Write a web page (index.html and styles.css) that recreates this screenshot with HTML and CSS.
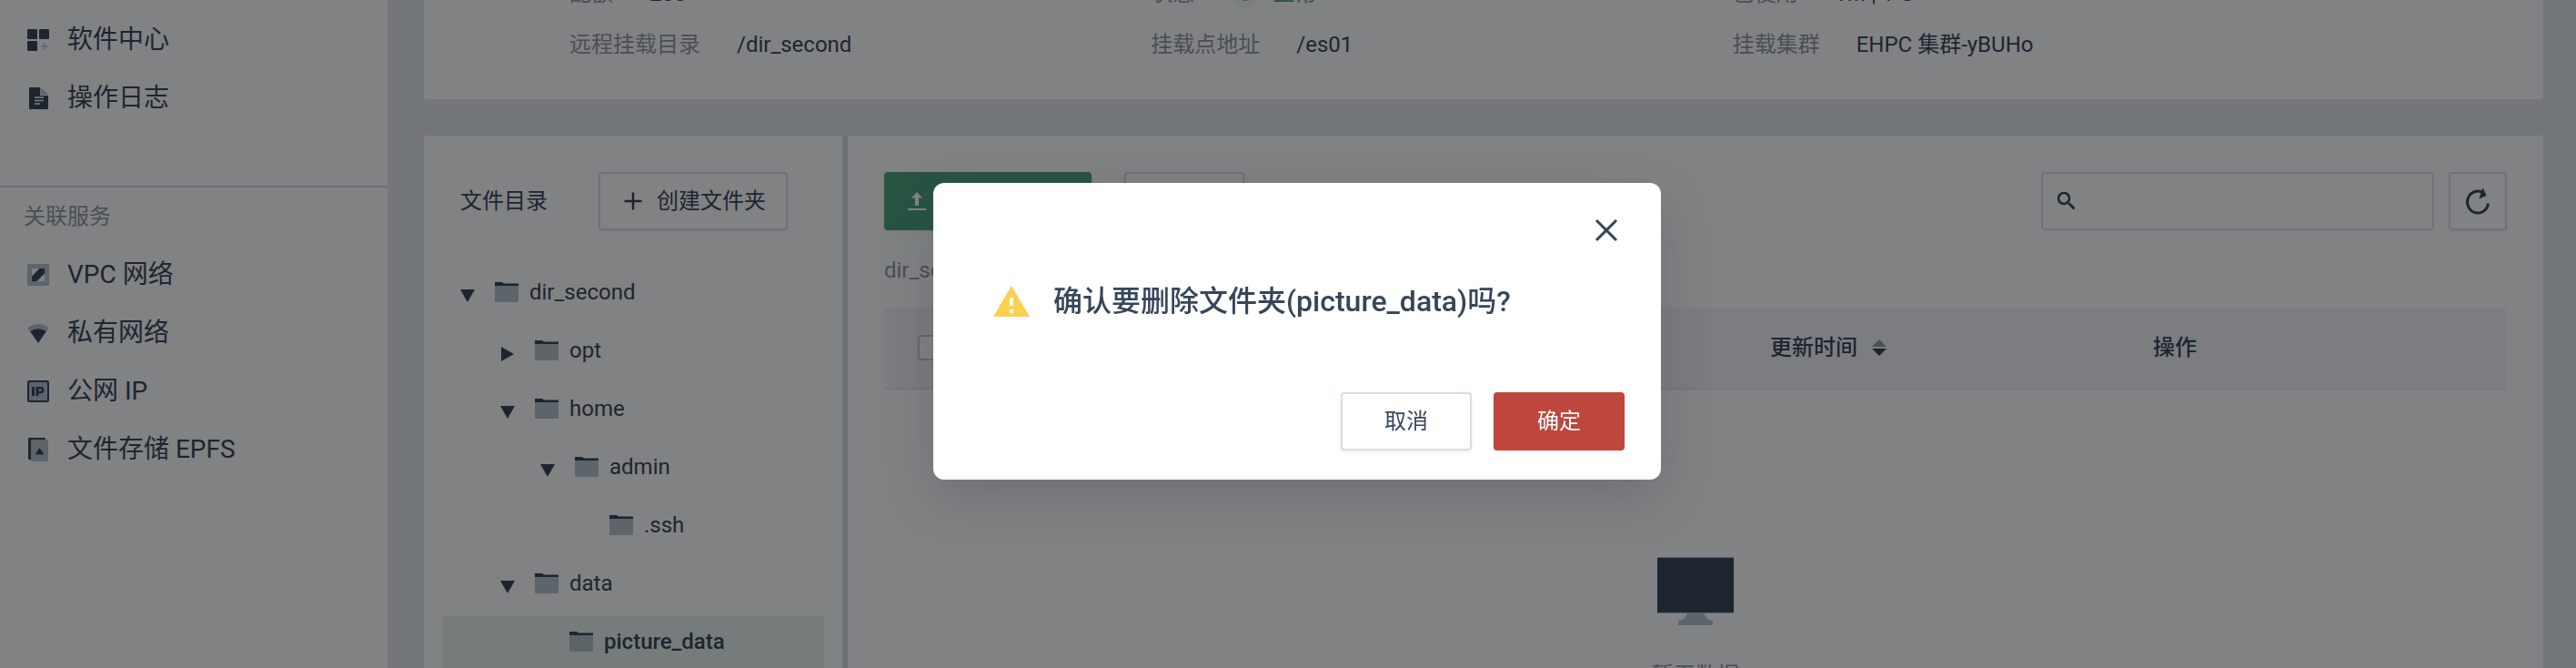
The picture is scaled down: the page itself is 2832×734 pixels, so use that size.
FILE: index.html
```html
<!DOCTYPE html>
<html lang="zh-CN">
<head>
<meta charset="utf-8">
<meta name="viewport" content="width=device-width, initial-scale=1">
<title>文件管理</title>
<link rel="stylesheet" href="styles.css">
</head>
<body>
<svg class="sprite" aria-hidden="true">
  <symbol id="folder" viewBox="0 0 26 22">
    <path class="light" d="M0 4h26v16.500a1.500 1.500 0 0 1-1.500 1.500h-23A1.500 1.500 0 0 1 0 20.500z"/>
    <path class="dark" d="M0 0h8l2 1.500h16v2.500H0z"/>
  </symbol>
  <symbol id="down" viewBox="0 0 16 16"><path class="dark" d="M0 1h16L8 15z"/></symbol>
  <symbol id="right" viewBox="0 0 16 16"><path class="dark" d="M1 0l14 8-14 8z"/></symbol>
</svg>
<div class="app">
  <aside class="sidebar">
    <nav class="nav">
      <a class="nav-item" href="#"><svg class="nav-icon" viewBox="0 0 24 24"><rect class="dark" width="11" height="11" rx="1"/><rect class="dark" x="13" width="11" height="11" rx="1"/><rect class="dark" y="13" width="11" height="11" rx="1"/><path class="light" d="M18 15h1.500v3.200H23v1.600h-3.500V23H18v-3.200h-3v-1.600h3z"/></svg>软件中心</a>
      <a class="nav-item" href="#"><svg class="nav-icon" viewBox="0 0 24 24"><path class="dark" d="M2 0h12v9h9v15H2z"/><path class="light" d="M14.500 0L23 8h-8.500z"/><path class="line" d="M8 11h10M8 14.500h10M8 18h6"/></svg>操作日志</a>
    </nav>
    <nav class="nav related">
      <h2 class="nav-title">关联服务</h2>
      <a class="nav-item" href="#"><svg class="nav-icon" viewBox="0 0 24 24"><path class="light" fill-rule="evenodd" d="M1 0h22a1 1 0 0 1 1 1v22a1 1 0 0 1-1 1H1a1 1 0 0 1-1-1V1a1 1 0 0 1 1-1zM5 5v14h14V5z"/><path class="dark" d="M13.500 5H19v5.500L10.500 19H5v-5.500z"/></svg>VPC 网络</a>
      <a class="nav-item" href="#"><svg class="nav-icon" viewBox="0 0 24 24"><path class="light" d="M0 6.500Q12-2.500 24 6.500L21 10Q12 5 3 10z"/><path class="dark" d="M3 10Q12 4.500 21 10L12 23z"/></svg>私有网络</a>
      <a class="nav-item" href="#"><svg class="nav-icon" viewBox="0 0 24 24"><rect class="dark" width="24" height="24" rx="2"/><rect class="light" x="2" y="2" width="20" height="20" rx="1"/><path class="dark" fill-rule="evenodd" d="M5 7h3v10H5zM9.500 7h5.500a3.600 3.600 0 0 1 0 7.200h-2.500V17h-3zM12.500 9.300v2.700h2a1.350 1.350 0 0 0 0-2.700z"/></svg>公网 IP</a>
      <a class="nav-item" href="#"><svg class="nav-icon" viewBox="0 0 24 24"><path class="dark" d="M2-1h17a1 1 0 0 1 1 1v2H4v21H2a1 1 0 0 1-1-1V0a1 1 0 0 1 1-1z"/><rect class="light" x="4" y="1" width="19" height="24" rx="1"/><path class="dark" d="M13.500 10l5 7.500h-10z"/></svg>文件存储 EPFS</a>
    </nav>
  </aside>
  <main class="main">
    <section class="card info">
      <dl class="facts">
        <div class="fact"><dt>配额</dt><dd>200</dd></div>
        <div class="fact"><dt>状态</dt><dd class="status"><span class="halo"></span>正常</dd></div>
        <div class="fact"><dt>已使用</dt><dd>1M | 1 G</dd></div>
        <div class="fact"><dt>远程挂载目录</dt><dd>/dir_second</dd></div>
        <div class="fact"><dt>挂载点地址</dt><dd>/es01</dd></div>
        <div class="fact"><dt>挂载集群</dt><dd>EHPC 集群-yBUHo</dd></div>
      </dl>
    </section>
    <section class="card files">
      <div class="tree-panel">
        <div class="tree-head">
          <h3 class="tree-title">文件目录</h3>
          <button class="btn create" type="button"><svg class="plus" viewBox="0 0 28 28"><path class="stroke" d="M4.500 14h19M14 4.500v19"/></svg>创建文件夹</button>
        </div>
        <ul class="tree">
          <li class="node"><svg class="toggle"><use href="#down"/></svg><svg class="folder"><use href="#folder"/></svg>dir_second</li>
          <li class="node level-1"><svg class="toggle"><use href="#right"/></svg><svg class="folder"><use href="#folder"/></svg>opt</li>
          <li class="node level-1"><svg class="toggle"><use href="#down"/></svg><svg class="folder"><use href="#folder"/></svg>home</li>
          <li class="node level-2"><svg class="toggle"><use href="#down"/></svg><svg class="folder"><use href="#folder"/></svg>admin</li>
          <li class="node leaf-3"><svg class="folder"><use href="#folder"/></svg>.ssh</li>
          <li class="node level-1"><svg class="toggle"><use href="#down"/></svg><svg class="folder"><use href="#folder"/></svg>data</li>
          <li class="node leaf-2 selected"><svg class="folder"><use href="#folder"/></svg>picture_data</li>
        </ul>
      </div>
      <div class="content">
        <div class="toolbar">
          <button class="btn upload" type="button"><svg class="upload-icon" viewBox="0 0 20 20"><path d="M10 0l6 6.500h-4V15H8V6.500H4zM0 18h20v2H0z"/></svg>上传文件</button>
          <button class="btn remove" type="button">删除</button>
          <label class="search"><svg class="search-icon" viewBox="0 0 20 20"><circle class="stroke" cx="7" cy="7" r="6"/><path class="stroke thick" d="M12.500 12.500l6 6"/></svg><input class="search-input" type="text" aria-label="搜索"></label>
          <button class="btn refresh" type="button" aria-label="刷新"><svg class="refresh-icon" viewBox="0 0 28 32"><path class="stroke thick" d="M18.500 6A11.500 12 0 1 0 25.500 18.500"/><path class="dark" d="M19.500 1l4 9-8 3.500 2-6.500z"/></svg></button>
        </div>
        <p class="crumb">dir_second</p>
        <table class="table">
          <thead><tr>
            <th class="check-cell"><input class="check" type="checkbox" aria-label="全选"></th>
            <th>名称</th><th>文件大小</th>
            <th><span class="sortable">更新时间<svg class="sort" viewBox="0 0 16 18"><path class="muted" d="M8 0l8 8H0z"/><path class="dark" d="M0 10h16l-8 8z"/></svg></span></th>
            <th>操作</th>
          </tr></thead>
        </table>
        <div class="empty">
          <svg class="monitor" viewBox="0 0 84 76"><path class="light" d="M33 61h18.500c1 5 4 9 9.500 9v5H23v-5c5.500 0 9-4 10-9z"/><path class="light" d="M0 0h84v62H0z"/><path class="dark" d="M0 1h84v60H0z"/></svg>
          <p class="empty-text">暂无数据</p>
        </div>
      </div>
    </section>
  </main>
</div>
<div class="overlay">
  <div class="modal" role="dialog" aria-modal="true" aria-labelledby="modal-title">
    <button class="close" type="button" aria-label="关闭"><svg class="close-icon" viewBox="0 0 24 24"><path class="stroke thick" d="M1 1l22 22M23 1L1 23"/></svg></button>
    <div class="message">
      <svg class="warning" viewBox="0 0 40 34"><path fill="#f8d150" d="M20 0l20 34H0z"/><path fill="#fff" d="M18 13h4v9h-4zM18 26h4v4h-4z"/></svg>
      <h1 class="modal-title" id="modal-title">确认要删除文件夹(picture_data)吗?</h1>
    </div>
    <div class="actions">
      <button class="btn action" type="button">取消</button>
      <button class="btn action danger" type="button">确定</button>
    </div>
  </div>
</div>
</body>
</html>
```
FILE: styles.css
```css
* { box-sizing: border-box; }
:root {
  --ink: #37455a;
  --soft: #b6c2cd;
  --muted: #8f98a3;
  --line: #d5dee7;
}
body {
  margin: 0;
  overflow: hidden;
  background: #e3e7ee;
  color: var(--ink);
  font: 24px/32px Roboto, "Noto Sans CJK SC", sans-serif;
}
h1, h2, h3, p, dl, dd, ul { margin: 0; padding: 0; font-weight: 400; }
svg { flex: none; display: block; overflow: visible; }
.sprite { position: absolute; width: 0; height: 0; }
.dark { fill: var(--ink); }
.light { fill: var(--soft); }
.muted { fill: var(--muted); }
.line { stroke: #fff; stroke-width: 1.500; fill: none; }
.stroke { stroke: var(--ink); stroke-width: 2.500; fill: none; }
.thick { stroke-width: 3; }

.app { display: flex; height: 100vh; overflow: hidden; }
.sidebar { flex: none; width: 426px; background: #fff; }
.nav { padding-top: 12px; }
.related { margin-top: 64px; padding-top: 16px; border-top: 2px solid var(--line); }
.nav-title { padding: 0 26px; margin-bottom: 16px; font-size: 24px; line-height: 32px; color: var(--muted); }
.nav-item {
  display: flex;
  align-items: center;
  gap: 20px;
  height: 64px;
  padding-left: 30px;
  font-size: 28px;
  color: var(--ink);
  text-decoration: none;
}
.nav-icon { width: 24px; height: 24px; }

.main { flex: 1; min-width: 0; padding: 0 36px 0 40px; margin-top: -35px; }
.card { background: #fff; border-radius: 4px; }
.info { padding: 0 252px 32px 160px; }
.facts { display: grid; grid-template-columns: repeat(3, 1fr); }
.fact { display: flex; align-items: center; gap: 40px; height: 56px; }
.fact dt { color: var(--muted); }
.status { display: flex; align-items: center; gap: 14px; color: #4da57c; }
.halo { width: 32px; height: 32px; border: 8px solid #f1f8f5; border-radius: 50%; background: #4da57c; background-clip: padding-box; }

.files { display: flex; margin-top: 40px; min-height: 640px; }
.tree-panel { flex: none; width: 466px; padding: 40px 20px; border-right: 6px solid var(--line); }
.tree-head { display: flex; align-items: center; gap: 56px; padding-left: 20px; margin-bottom: 40px; }
.tree-title { font-size: 24px; }
.btn {
  display: flex;
  align-items: center;
  justify-content: center;
  height: 64px;
  padding: 0 22px;
  border: 2px solid var(--line);
  border-radius: 4px;
  background: #fff;
  color: inherit;
  font: inherit;
  white-space: nowrap;
  box-shadow: 0 2px 4px rgba(55, 69, 90, .08);
}
.create { gap: 12px; }
.plus { width: 28px; height: 28px; }
.tree { list-style: none; }
.node { display: flex; align-items: center; height: 64px; padding: 0 0 8px 20px; }
.toggle { width: 16px; height: 16px; margin: 8px 22px 0 0; }
.folder { width: 26px; height: 22px; margin-right: 12px; }
.level-1 { padding-left: 64px; }
.level-2 { padding-left: 108px; }
.leaf-2 { padding-left: 140px; }
.leaf-3 { padding-left: 184px; }
.selected { background: #e8f3ee; font-weight: 500; }

.content { flex: 1; min-width: 0; padding: 40px; }
.toolbar { display: flex; }
.upload { gap: 16px; width: 228px; justify-content: flex-start; padding: 0 24px; border-color: #4da57c; background: #4da57c; color: #fff; }
.upload-icon { width: 20px; height: 20px; fill: #fff; }
.remove { width: 132px; margin-left: 36px; }
.search {
  display: flex;
  align-items: center;
  gap: 12px;
  width: 432px;
  height: 64px;
  margin: 0 16px 0 auto;
  padding: 0 16px;
  border: 2px solid var(--line);
  border-radius: 4px;
}
.search-icon { width: 20px; height: 20px; }
.search-input { flex: 1; min-width: 0; border: 0; outline: 0; background: transparent; font: inherit; color: inherit; }
.refresh { width: 64px; padding: 0; }
.refresh-icon { width: 28px; height: 32px; }
.crumb { margin: 28px 0 25px; color: var(--muted); }
.table { width: 100%; table-layout: fixed; border-collapse: separate; border-spacing: 0; background: #f4f4f8; border-bottom: 2px solid #e4e8f0; border-radius: 4px; }
.table th { height: 88px; padding: 0 0 0 32px; text-align: left; font-weight: 500; }
.table .check-cell { width: 100px; padding-left: 37px; }
.check { appearance: none; display: block; width: 28px; height: 28px; margin: 0; border: 2px solid #c1cddb; border-radius: 4px; background: #fff; }
.sortable { display: flex; align-items: center; gap: 16px; }
.sort { width: 16px; height: 18px; }
.empty { display: flex; flex-direction: column; align-items: center; padding-top: 184px; }
.monitor { width: 84px; height: 76px; }
.empty-text { margin-top: 38px; color: var(--muted); }

.overlay {
  position: fixed;
  inset: 0;
  display: flex;
  justify-content: center;
  align-items: flex-start;
  padding: 201px 0 0 20px;
  background: rgba(3, 5, 8, .5);
}
.modal {
  width: 800px;
  padding: 32px 40px;
  border-radius: 12px;
  background: #fff;
  box-shadow: 0 20px 60px rgba(36, 46, 66, .2);
}
.close { display: block; margin-left: auto; padding: 8px; border: 0; background: none; }
.close-icon { width: 24px; height: 24px; }
.message { display: flex; align-items: center; gap: 26px; margin: 34px 0 76px; padding-left: 26px; }
.warning { width: 40px; height: 34px; }
.modal-title { font-size: 32px; line-height: 48px; font-weight: 500; }
.actions { display: flex; justify-content: flex-end; gap: 24px; }
.action { width: 144px; }
.danger { border-color: #be463c; background: #be463c; color: #fff; }
```
